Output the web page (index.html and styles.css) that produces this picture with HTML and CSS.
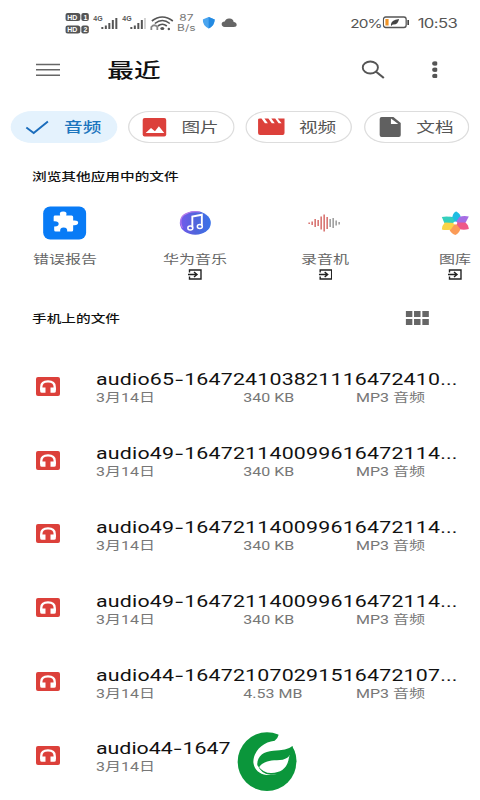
FILE: index.html
```html
<!DOCTYPE html>
<html lang="zh-CN">
<head>
<meta charset="utf-8">
<title>最近</title>
<link rel="stylesheet" href="styles.css">
</head>
<body>
<svg class="defs" width="0" height="0">
  <defs>
    <linearGradient id="music" x1="0" y1="0" x2="1" y2="0"><stop offset="0" stop-color="#745bed"/><stop offset=".5" stop-color="#5164db"/><stop offset="1" stop-color="#3972e9"/></linearGradient>
    <symbol id="headphones" viewBox="0 0 24 19" preserveAspectRatio="none"><rect width="24" height="19" rx="2" fill="#dc403a"/><path d="M5.300 13V9.700C5.300 6.200 8 4.300 12 4.300s6.700 1.900 6.700 5.400V13" fill="none" stroke="#fff" stroke-width="2.300"/><path d="M4.150 10.500h5.350v5.300H6q-1.850 0-1.850-1.500zM14.500 10.500h5.350v3.800q0 1.500-1.850 1.500h-3.500z" fill="#fff"/></symbol>
    <symbol id="open" viewBox="0 0 14 11" preserveAspectRatio="none"><path d="M1.500 3.500V1h11.500v9H1.500V7.500M0 5.500h8M6 3l3 2.500L6 8" fill="none" stroke="#222" stroke-width="1.400"/></symbol>
  </defs>
</svg>
<div class="screen">
  <header class="status">
    <svg class="status-left" viewBox="0 0 113 26" preserveAspectRatio="none">
      <g fill="#555"><rect x="0" y="3" width="15" height="8" rx="2.500"/><rect x="16" y="3" width="7.500" height="8" rx="2"/><rect x="0" y="15.500" width="15" height="8" rx="2.500"/><rect x="16" y="15.500" width="7.500" height="8" rx="2"/></g>
      <g class="sim"><text x="2" y="9.600">HD</text><text x="18.200" y="9.600">1</text><text x="2" y="22.100">HD</text><text x="18.200" y="22.100">2</text></g>
      <g class="net"><text x="28" y="11.500">4G</text><text x="57" y="11.500">4G</text></g>
      <g fill="#555"><path d="M36 17h2v2h-2zM39.500 15.500h2v3.500h-2zM43 13h2v6h-2zM46.500 10h2v9h-2zM50 8h2v11h-2zM65 17h2v2h-2zM68.500 15.500h2v3.500h-2zM72 13h2v6h-2zM75.500 10h2v9h-2z"/><path fill="#bbb" d="M79 8h1.300v11H79z"/><ellipse cx="97" cy="18.500" rx="2" ry="1.500"/><circle cx="103.500" cy="19" r="1.200"/></g>
      <path d="M86.500 11q10.500-8 21 0M89.500 13.500q7.500-6 15 0M92.500 16q4.500-3.500 9 0" fill="none" stroke="#555" stroke-width="1.600"/>
      <path d="M86 20v-3q3-3.500 6 0v3" fill="none" stroke="#888" stroke-width="1.800"/>
    </svg>
    <div class="speed"><span>87</span><span>B/s</span></div>
    <svg class="status-apps" viewBox="0 0 36 14" preserveAspectRatio="none"><path d="M0 3.500L6 1l6 2.500Q12 9.500 6 12.500 0 9.500 0 3.500z" fill="#4aa5ef"/><path d="M6 1l6 2.500Q12 9.500 6 12.500z" fill="#248ae2"/><path d="M22 11q-3-.5-3-3t3-2.500q1.500-3.500 5-3 3.500 0 4 3.500 3 .5 3 2.700T31 11z" fill="#666"/></svg>
    <span class="battery-text">20%</span>
    <svg class="battery" viewBox="0 0 30 13" preserveAspectRatio="none"><rect x=".8" y="1" width="25" height="10.500" rx="2.500" fill="#fff" stroke="#555" stroke-width="1.400"/><path d="M3 3h3.500v6.500H3z" fill="#ef9427"/><path d="M28 4v5" stroke="#444" stroke-width="1.800"/><path d="M9 9q0-5 9-6-1 6-7 5.500L9.500 10z" fill="#444"/></svg>
    <span class="clock">10:53</span>
  </header>
  <nav class="toolbar">
    <svg class="menu" viewBox="0 0 24 14" preserveAspectRatio="none"><path d="M0 1.500h24M0 6.800h24M0 12.200h24" stroke="#666" stroke-width="1.600"/></svg>
    <h1>最近</h1>
    <svg class="search" viewBox="0 0 24 20" preserveAspectRatio="none"><ellipse cx="9" cy="7.500" rx="7.600" ry="6" fill="none" stroke="#555" stroke-width="1.900"/><path d="M14.500 11.500L22.500 18" stroke="#555" stroke-width="2.200"/></svg>
    <svg class="more" viewBox="0 0 6 18" preserveAspectRatio="none"><g fill="#555"><ellipse cx="3" cy="2.500" rx="2.800" ry="2.200"/><ellipse cx="3" cy="8.700" rx="2.800" ry="2.200"/><ellipse cx="3" cy="14.900" rx="2.800" ry="2.200"/></g></svg>
  </nav>
  <div class="chips">
    <div class="chip active"><svg viewBox="0 0 54 32" preserveAspectRatio="none"><path d="M16 16.500l7.500 5.500L38 10.500" fill="none" stroke="#1b6dbc" stroke-width="2"/></svg>音频</div>
    <div class="chip"><svg viewBox="0 0 54 32" preserveAspectRatio="none"><rect x="15" y="7" width="24" height="18.500" rx="2" fill="#dc403b"/><path d="M18 22l5.500-5 4 3.300 4-5L37 22z" fill="#fff"/></svg>图片</div>
    <div class="chip"><svg viewBox="0 0 54 32" preserveAspectRatio="none"><path d="M13 8.500q0-1 2-1h1.500l3.500 4.700h3l-3.500-4.700h4l3.500 4.700h3l-3.500-4.700h4l3.500 4.700h3L33 7.500h7V22q0 2-2 2H15q-2 0-2-2z" fill="#dc403b"/></svg>视频</div>
    <div class="chip"><svg viewBox="0 0 54 32" preserveAspectRatio="none"><path d="M18 6h12l7.500 6v12q0 2-2 2H18q-2 0-2-2V8q0-2 2-2z" fill="#606060"/><path d="M27.500 7.500v5.500h7.500z" fill="#fff"/></svg>文档</div>
  </div>
  <h2>浏览其他应用中的文件</h2>
  <div class="apps">
    <div class="app">
      <svg class="app-icon" viewBox="0 0 44 34" preserveAspectRatio="none"><rect x=".5" y=".5" width="43" height="33" rx="7" fill="#087bf6"/><path d="M12 9.500h5.500q-1.500-4 3-4t3 4H29q1.500 0 1.500 1.500v3.500q5-.5 5 2.300t-5 2.400V24q0 1.500-1.500 1.500h-4.500q.5-4-3.500-4t-3.500 4H13q-1.500 0-1.500-1.500v-3.500q4.500.3 4.500-2.700t-5-2.600V11q0-1.500 1-1.500z" fill="#fff"/></svg>
      <span>错误报告</span>
    </div>
    <div class="app">
      <svg class="app-icon" viewBox="0 0 44 34" preserveAspectRatio="none"><ellipse cx="22" cy="17" rx="15.500" ry="11.800" fill="url(#music)"/><path d="M9 22Q4 10 15 6.800 20 4.800 27 6" fill="none" stroke="#b57bea" stroke-width="1.200"/><path d="M19 21.500V10.500l9.500-1.800v11" fill="none" stroke="#fff" stroke-width="1.900"/><ellipse cx="17" cy="22" rx="2.500" ry="2" fill="none" stroke="#fff" stroke-width="1.500"/><ellipse cx="26.500" cy="20.500" rx="2.500" ry="2" fill="none" stroke="#fff" stroke-width="1.500"/></svg>
      <span>华为音乐</span><svg class="open"><use href="#open"/></svg>
    </div>
    <div class="app">
      <svg class="app-icon" viewBox="0 0 44 34" preserveAspectRatio="none"><g fill="none" stroke-width="1.500"><path d="M6.500 16.500v1.500M9.500 15.500v3.500M12.500 13v8M15.500 14v6M18.500 10.500v13M21.500 8.500v17M24.500 11v12" stroke="#d66b68"/><path d="M27.500 13v8M30.500 12v10M33.500 14.500v5M36.500 16v2.500" stroke="#999"/></g></svg>
      <span>录音机</span><svg class="open"><use href="#open"/></svg>
    </div>
    <div class="app">
      <svg class="app-icon" viewBox="0 0 44 34" preserveAspectRatio="none"><path d="M22 17l-8-5q2-2 5-1 1-5 4-5.500 4 2 4.500 6z" fill="#20bde2"/><path d="M8.500 11q6-1 11 .5L22 17H11z" fill="#34cfbd"/><path d="M22 17l4-6q4-1.500 9.500-.5L32 17z" fill="#a56de4"/><path d="M22 16.500h10q3 2 3.500 6.500-5 1.500-10 0z" fill="#ee5888"/><path d="M22 17l5 6q-1 4-5 6-5-2-6-6z" fill="#fb9b57"/><path d="M22 17l-4.500 6.500q-5 1-9 0 0-4 3-7z" fill="#f9d448"/><ellipse cx="22" cy="17" rx="2" ry="1.600" fill="#fff"/></svg>
      <span>图库</span><svg class="open"><use href="#open"/></svg>
    </div>
  </div>
  <div class="section">
    <h2>手机上的文件</h2>
    <svg class="grid-icon" viewBox="0 0 24 14" preserveAspectRatio="none"><path d="M.5 0h6.500v6H.5zM8.700 0h6.500v6H8.700zM17 0h6.500v6H17zM.5 8h6.500v6H.5zM8.700 8h6.500v6H8.700zM17 8h6.500v6H17z" fill="#666"/></svg>
  </div>
  <main class="files">
    <div class="file"><svg class="file-icon"><use href="#headphones"/></svg><div class="info"><div class="name">audio65<span class="dash">-</span>164724103821116472410...</div><div class="meta"><span>3月14日</span><span>340 KB</span><span>MP3 音频</span></div></div></div>
    <div class="file"><svg class="file-icon"><use href="#headphones"/></svg><div class="info"><div class="name">audio49<span class="dash">-</span>164721140099616472114...</div><div class="meta"><span>3月14日</span><span>340 KB</span><span>MP3 音频</span></div></div></div>
    <div class="file"><svg class="file-icon"><use href="#headphones"/></svg><div class="info"><div class="name">audio49<span class="dash">-</span>164721140099616472114...</div><div class="meta"><span>3月14日</span><span>340 KB</span><span>MP3 音频</span></div></div></div>
    <div class="file"><svg class="file-icon"><use href="#headphones"/></svg><div class="info"><div class="name">audio49<span class="dash">-</span>164721140099616472114...</div><div class="meta"><span>3月14日</span><span>340 KB</span><span>MP3 音频</span></div></div></div>
    <div class="file"><svg class="file-icon"><use href="#headphones"/></svg><div class="info"><div class="name">audio44<span class="dash">-</span>164721070291516472107...</div><div class="meta"><span>3月14日</span><span>4.53 MB</span><span>MP3 音频</span></div></div></div>
    <div class="file"><svg class="file-icon"><use href="#headphones"/></svg><div class="info"><div class="name last">audio44<span class="dash">-</span>1647</div><div class="meta"><span>3月14日</span></div></div></div>
  </main>
</div>
<svg class="logo" viewBox="651 36 180 180"><circle cx="741" cy="125" r="88" fill="#0b963b"/><path d="M775 36L776 44Q773 56 764 62C728 66 701 92 700 126C702 151 722 166 750 165C785 164 808 142 808 111L818 78L840 60L820 30z" fill="#fff"/><path d="M816 78Q830 101 829 125L817 146L806 131L808 111z" fill="#0b963b"/><path d="M712 136C710 109 730 94 760 92Q800 92 818 78Q815 118 780 120C746 121 729 125 717 142z" fill="#0b963b"/><path d="M714 137Q730 160 755 159C787 158 804 140 807 112Q811 166 752 164Q723 162 714 137z" fill="#0b963b"/></svg>
</body>
</html>
```
FILE: styles.css
```css
* { box-sizing: border-box; }
body { margin: 0; width: 480px; height: 800px; overflow: hidden; background: #fff; font-family: Inter, "Noto Sans CJK SC", sans-serif; }
svg { display: block; flex: none; }
h1, h2 { margin: 0; }

/* The screen is laid out 360px wide and stretched to the window's width. */
.screen { width: 360px; height: 800px; overflow: hidden; transform: scaleX(1.33333); transform-origin: 0 0; color: #111; }

.status { display: flex; align-items: center; height: 45px; padding-left: 49px; color: #555; white-space: nowrap; }
.status-left { width: 84.75px; height: 26px; }
.sim { fill: #fff; font: 700 7px "Liberation Sans", sans-serif; }
.net { fill: #555; font: 700 7px "Liberation Sans", sans-serif; }
.speed { display: flex; flex-direction: column; align-items: center; width: 12px; font-size: 9px; line-height: 10px; color: #777; }
.status-apps { width: 27px; height: 14px; margin-left: 6.500px; }
.battery-text { width: 24.500px; margin-left: 83.500px; padding-top: 2px; font-size: 11.500px; letter-spacing: -.7px; }
.battery { width: 20.500px; height: 13px; }
.clock { margin-left: 5.500px; padding-top: 2px; font-size: 12.500px; letter-spacing: -.45px; }

.toolbar { display: flex; align-items: center; height: 50px; padding-left: 27px; }
.menu { width: 18px; height: 14px; }
h1 { width: 191px; padding: 2px 0 0 35.500px; font-size: 20px; font-weight: 500; line-height: 30px; }
.search { width: 18px; height: 20px; margin-left: 35px; }
.more { width: 4.500px; height: 18px; margin-left: 34.500px; }

.chips { display: flex; gap: 8.500px; margin-top: 16px; padding-left: 8.300px; }
.chip { display: flex; align-items: center; width: 79.600px; height: 32px; border-radius: 16px; box-shadow: inset 0 0 0 1px #ddd; color: #555; font-size: 14px; line-height: 32px; white-space: nowrap; }
.chip svg { width: 39.700px; height: 32px; }
.chip.active { background: #e4f2fd; box-shadow: none; color: #1c75bd; font-weight: 500; }

h2 { font-size: 11px; font-weight: 500; line-height: 16px; }
.chips + h2 { margin: 26px 0 0 24px; }
.apps { display: grid; grid-template-columns: repeat(4, 97.500px); height: 86px; margin-top: 21px; color: #666; }
.app { display: flex; flex-direction: column; align-items: center; font-size: 12px; line-height: 18px; }
.app-icon { width: 33px; height: 34px; margin-bottom: 11px; }
.open { width: 10.500px; height: 11px; }
.section { display: flex; align-items: center; justify-content: space-between; height: 20px; margin-top: 17px; padding: 0 38.500px 0 24px; }
.grid-icon { width: 18px; height: 14px; margin-bottom: 2px; }

.files { margin-top: 20.500px; }
.file { display: flex; align-items: center; gap: 27px; height: 73.800px; padding-left: 27px; font-family: Roboto, "Noto Sans CJK SC", sans-serif; }
.file-icon { width: 18px; height: 19px; }
.info { padding-top: 5px; }
.name { height: 20px; font-size: 16px; line-height: 20px; letter-spacing: .15px; white-space: nowrap; }
.name.last { letter-spacing: 0; }
.dash { font-family: Inter, sans-serif; line-height: 1; }
.meta { display: grid; grid-template-columns: 110.500px 84.500px 60px; height: 17px; color: #777; font-size: 12px; line-height: 17px; white-space: nowrap; }

.defs { position: absolute; }
.logo { position: absolute; left: 237px; top: 732px; width: 60px; height: 60px; }
```
